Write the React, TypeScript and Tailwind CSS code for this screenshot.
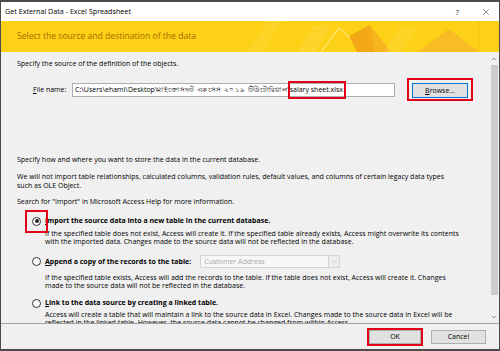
import { X, ChevronUp, ChevronDown } from "lucide-react"

const Radio = ({ checked }: { checked?: boolean }) => (
  <span className="w-[9px] h-[9px] rounded-full border border-[#333] bg-white flex items-center justify-center shrink-0">
    {checked && <span className="w-[4px] h-[4px] rounded-full bg-[#222]" />}
  </span>
)

const BannerArt = () => (
  <svg width="250" height="31" viewBox="0 0 250 31" className="shrink-0">
    {/* hatch strokes */}
    {[0, 3, 6, 9, 12].map((o) => (
      <line key={"a" + o} x1={o} y1="31" x2={o + 20} y2="0" stroke="#ffe46a" strokeWidth="0.6" />
    ))}
    {[0, 3, 6, 9, 12, 15].map((o) => (
      <line key={"b" + o} x1={50 + o} y1="31" x2={66 + o} y2="4" stroke="#ffe27a" strokeWidth="0.6" />
    ))}
    <polyline points="72,31 90,7 116,31" fill="none" stroke="#fff0a8" strokeWidth="1" />
    <polygon points="100,15 121,4 126,31 108,31" fill="#f3a817" />
    <polygon points="121,4 142,31 126,31" fill="#f6b51d" />
    {[0, 3, 6, 9, 12, 15].map((o) => (
      <line key={"c" + o} x1={136 + o} y1="31" x2={152 + o} y2="6" stroke="#ffe06a" strokeWidth="0.6" />
    ))}
    <polygon points="168,31 200,8 230,31" fill="#f7b52a" opacity="0.75" />
    <line x1="230" y1="0" x2="230" y2="31" stroke="#f0c010" strokeWidth="1" />
  </svg>
)

export default function App() {
  return (
    <div className="w-[500px] h-[351px] flex flex-col overflow-hidden border-t-2 border-b-2 border-x border-[#4b4b4b] bg-[#f0f0f0] text-black font-['Open_Sans',sans-serif]">
      {/* Title bar */}
      <div className="h-[19px] bg-white flex items-center pl-[4px] pr-[8px] text-[7.2px]">
        <span>Get External Data - Excel Spreadsheet</span>
        <span className="ml-auto mr-[22px] text-[8px] text-[#333]">?</span>
        <X size={10} strokeWidth={1.2} className="text-[#222]" />
      </div>

      {/* Banner */}
      <div className="h-[31px] bg-[#fcd116] flex items-center">
        <span className="pl-[16px] text-[8.6px] text-[#a86b00]">Select the source and destination of the data</span>
        <div className="ml-auto flex">
          <BannerArt />
        </div>
      </div>

      {/* Main */}
      <div className="h-[271px] flex">
        <div className="flex-1 overflow-hidden pl-[16px] text-[7px]">
          <div className="mt-[7px] h-[10px] leading-[10px]">Specify the source of the definition of the objects.</div>

          <div className="mt-[13px] h-[16px] flex items-center">
            <span className="ml-[16px] w-[39px] leading-[10px]">
              <u>F</u>ile name:
            </span>
            <div className="w-[323px] h-[14px] bg-white border border-[#abadb3] flex items-center pl-[2px] whitespace-nowrap overflow-visible leading-[10px]">
              <span>C:\Users\ehami\Desktop\</span>
              <span className="tracking-[0.4px]">মাইক্রোসফট একসেস ২০১৯ টিউটোরিয়াল</span>
              <span>\</span>
              <span className="relative">
                salary sheet.xlsx
                <span className="absolute left-[-2px] right-[-3px] top-[-4px] bottom-[-4px] border-2 border-[#e5001a]" />
              </span>
            </div>
            <div className="relative ml-[17px] self-start mt-[1px]">
              <div className="w-[56px] h-[15px] bg-[#e1e1e1] border border-[#0078d7] flex items-center justify-center leading-[10px]">
                <u>B</u>rowse...
              </div>
              <span className="absolute left-[-5px] right-[-5px] top-[-5px] bottom-[-3px] border-2 border-[#e5001a]" />
            </div>
          </div>

          <div className="mt-[57px] h-[10px] leading-[10px]">Specify how and where you want to store the data in the current database.</div>

          <div className="mt-[7px] leading-[9px] whitespace-nowrap">
            We will not import table relationships, calculated columns, validation rules, default values, and columns of certain legacy data types
            <br />
            such as OLE Object.
          </div>

          <div className="mt-[7px] h-[10px] leading-[10px]">Search for "Import" in Microsoft Access Help for more information.</div>

          <div className="mt-[9px] h-[10px] flex items-center leading-[10px]">
            <span className="relative ml-[15px]">
              <Radio checked />
              <span className="absolute left-[-7px] top-[-7px] w-[23px] h-[23px] border-2 border-[#e5001a]" />
            </span>
            <span className="ml-[4px] font-bold">
              <u>I</u>mport the source data into a new table in the current database.
            </span>
          </div>
          <div className="mt-[4px] ml-[28px] leading-[8px] whitespace-nowrap">
            If the specified table does not exist, Access will create it. If the specified table already exists, Access might overwrite its contents
            <br />
            with the imported data. Changes made to the source data will not be reflected in the database.
          </div>

          <div className="mt-[8px] h-[15px] flex items-center leading-[10px]">
            <span className="ml-[15px]">
              <Radio />
            </span>
            <span className="ml-[4px] font-bold">
              <u>A</u>ppend a copy of the records to the table:
            </span>
            <div className="ml-[9px] w-[140px] h-[13px] border border-[#d4d4d4] bg-[#f7f7f7] flex items-center">
              <span className="pl-[3px] text-[#a8a8a8] flex-1">Customer Address</span>
              <span className="w-[11px] h-full border-l border-[#d4d4d4] bg-[#ececec] flex items-center justify-center">
                <ChevronDown size={7} strokeWidth={1.5} className="text-[#b0b0b0]" />
              </span>
            </div>
          </div>
          <div className="mt-[5px] ml-[28px] leading-[8px] whitespace-nowrap">
            If the specified table exists, Access will add the records to the table. If the table does not exist, Access will create it. Changes
            <br />
            made to the source data will not be reflected in the database.
          </div>

          <div className="mt-[8px] h-[10px] flex items-center leading-[10px]">
            <span className="ml-[15px]">
              <Radio />
            </span>
            <span className="ml-[4px] font-bold">
              <u>L</u>ink to the data source by creating a linked table.
            </span>
          </div>
          <div className="mt-[3px] ml-[28px] leading-[8px] whitespace-nowrap">
            Access will create a table that will maintain a link to the source data in Excel. Changes made to the source data in Excel will be
            <br />
            reflected in the linked table. However, the source data cannot be changed from within Access.
          </div>
        </div>

        {/* Scrollbar */}
        <div className="w-[10px] flex flex-col items-center bg-[#f0f0f0]">
          <div className="h-[13px] flex items-center justify-center">
            <ChevronUp size={8} strokeWidth={2} className="text-[#606060]" />
          </div>
          <div className="w-[7px] h-[230px] bg-[#cdcdcd]" />
          <div className="flex-1" />
          <div className="h-[13px] flex items-center justify-center">
            <ChevronDown size={8} strokeWidth={2} className="text-[#606060]" />
          </div>
        </div>
      </div>

      <div className="h-px bg-[#a0a0a0]" />

      {/* Footer */}
      <div className="h-[25px] flex items-start justify-end pt-[6px] pr-[13px] text-[7px]">
        <div className="relative">
          <div className="w-[52px] h-[14px] bg-[#e1e1e1] border border-[#adadad] flex items-center justify-center">OK</div>
          <span className="absolute -inset-[2px] border-2 border-[#e5001a]" />
        </div>
        <div className="ml-[10px] w-[55px] h-[14px] bg-[#e1e1e1] border border-[#adadad] flex items-center justify-center">
          Cancel
        </div>
      </div>
    </div>
  )
}
